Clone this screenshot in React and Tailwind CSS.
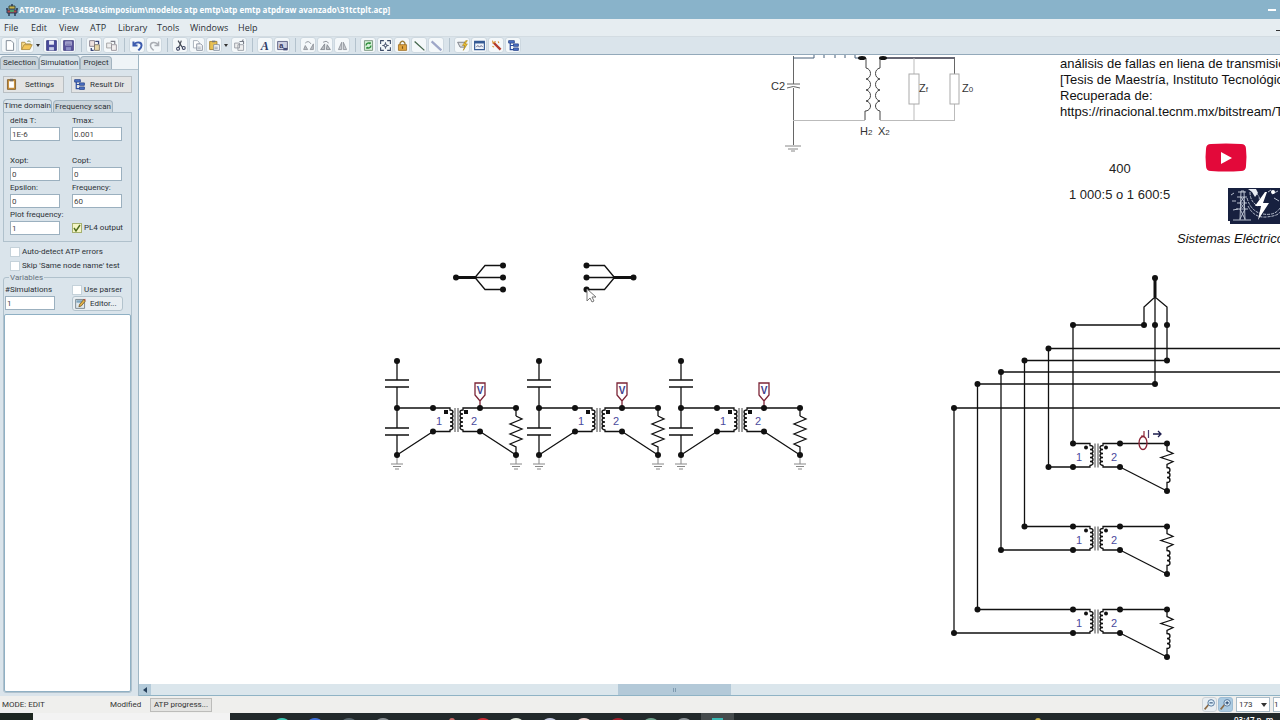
import React from "react";

const INK = "#111111";

/* ---------- toolbar ---------- */

const ICONS = {
  newFile: (
    <path d="M4 2h6l3 3v9H4z" fill="#fff" stroke="#6b7785" />
  ),
  open: (
    <>
      <path d="M2 13V4h4l1 2h6v2" fill="#f6dc8c" stroke="#a8873a" />
      <path d="M2 13l3-6h10l-3 6z" fill="#f3c75a" stroke="#a8873a" />
      <path d="M9 3q3-2 4 1" fill="none" stroke="#5b7a3c" />
    </>
  ),
  save: (
    <>
      <path d="M2 2h12v12H2z" fill="#4a4c9c" stroke="#33357c" />
      <path d="M5 2h6v5H5z" fill="#e9ecf8" />
      <path d="M5 10h6v4H5z" fill="#c5cae6" />
    </>
  ),
  saveAs: (
    <>
      <path d="M2 2h12v12H2z" fill="#5b559c" stroke="#3d3a7c" />
      <path d="M4 3h8v5H4z" fill="#b9b8da" />
      <path d="M5 10h6v4H5z" fill="#8d90c6" />
      <path d="M5 5h6M5 7h6" stroke="#6a68a6" />
    </>
  ),
  importFile: (
    <>
      <path d="M2 2h6v7H2z" fill="#efe3e0" stroke="#7b7480" />
      <path d="M8 7h6v7H8z" fill="#e8d7a8" stroke="#6f6a60" />
      <path d="M9 3h4v3M4 11v3h3" fill="none" stroke="#3a4577" strokeWidth="1.6" />
    </>
  ),
  exportFile: (
    <>
      <path d="M2 5h6v6H2z" fill="#eee" stroke="#999" />
      <path d="M8 7h6v7H8z" fill="#f1eeee" stroke="#8d8890" />
      <path d="M7 3h5v3" fill="none" stroke="#7d7d88" strokeWidth="1.4" />
    </>
  ),
  undo: (
    <path d="M3 3v5h5M3.500 7.500C6 3 13 3 13 8c0 3-2 4-4 6" fill="none" stroke="#3d5cae" strokeWidth="2.400" />
  ),
  redo: (
    <path d="M13 3v5H8M12.500 7.500C10 3 3 3 3 8c0 3 2 4 4 6" fill="none" stroke="#a9adb3" strokeWidth="1.800" />
  ),
  cut: (
    <>
      <path d="M5 2l5 8M9 2L7 8l-2 3" fill="none" stroke="#444a55" strokeWidth="1.400" />
      <circle cx="5" cy="12" r="1.800" fill="none" stroke="#39415f" strokeWidth="1.300" />
      <circle cx="12" cy="11" r="1.800" fill="none" stroke="#39415f" strokeWidth="1.300" />
    </>
  ),
  copy: (
    <>
      <path d="M3 2h5l2 2v7H3z" fill="#fff" stroke="#9aa2ae" />
      <path d="M7 6h5l2 2v6H7z" fill="#f4f5f7" stroke="#7f8896" />
      <path d="M8 10h4M8 12h4" stroke="#9aa2ae" />
    </>
  ),
  paste: (
    <>
      <path d="M2 3h9v10H2z" fill="#e8c052" stroke="#9a7a2c" />
      <path d="M5 2h4v2H5z" fill="#777" />
      <path d="M7 7h7v7H7z" fill="#fff" stroke="#7b8798" />
      <path d="M8 10h4M8 12h4" stroke="#7b8798" />
    </>
  ),
  duplicate: (
    <>
      <path d="M2 5h6v6H2zM6 7h7v7H6z" fill="#eee" stroke="#8f949c" />
      <path d="M8 3h5v3M11 2l2-1" fill="none" stroke="#777c86" strokeWidth="1.300" />
    </>
  ),
  textTool: (
    <text x="2" y="14" fontSize="15" fontStyle="italic" fontFamily="Liberation Serif, serif" fontWeight="700" fill="#2b3a66">A</text>
  ),
  textBox: (
    <>
      <path d="M2 3h12v10H2z" fill="#cdd0e2" stroke="#4c5076" />
      <text x="4" y="11" fontSize="9" fontWeight="700" fontFamily="Liberation Sans, sans-serif" fill="#33355c">a</text>
      <path d="M9 11h5v3H9z" fill="#454b78" />
    </>
  ),
  rotateLeft: (
    <>
      <path d="M2 13h5L4 8zM10 13h4V6z" fill="#b9bdc2" stroke="#8a8f96" />
      <path d="M4 5q4-4 7 1" fill="none" stroke="#7d828a" />
    </>
  ),
  rotateRight: (
    <>
      <path d="M2 13h5V6zM9 13h5l-4-6z" fill="#b9bdc2" stroke="#7d828a" />
      <path d="M5 4q4-3 7 1" fill="none" stroke="#7d828a" />
    </>
  ),
  mirror: (
    <path d="M3 13h4V4zM9 13h4L9 4z" fill="#c9cdd2" stroke="#8a8f96" />
  ),
  refresh: (
    <>
      <path d="M3 2h10v12H3z" fill="#d4efd6" stroke="#6e8a72" />
      <path d="M5 8c0-3 4-4 5-2V4M11 8c0 3-4 4-5 2v2" fill="none" stroke="#2f8f3d" strokeWidth="1.700" />
    </>
  ),
  fit: (
    <>
      <path d="M2 6V2h4M10 2h4v4M14 10v4h-4M6 14H2v-4" fill="none" stroke="#3c4a66" strokeWidth="1.300" />
      <path d="M8 4v8M4 8h8" stroke="#55617a" strokeWidth="1.300" />
      <path d="M6.500 6.500h3v3h-3z" fill="#fff" stroke="#3c4a66" />
    </>
  ),
  lock: (
    <>
      <path d="M5 8V5q3-5 6 0v3" fill="none" stroke="#9a7b35" strokeWidth="1.600" />
      <path d="M3 7h10v7H3z" fill="#e0a53f" stroke="#9c6d22" />
      <path d="M8 9v3" stroke="#7a5218" strokeWidth="1.400" />
    </>
  ),
  line: <path d="M2 3l12 11" stroke="#41644a" strokeWidth="1.600" />,
  relation: <path d="M2 3l12 11" stroke="#9ea7c8" strokeWidth="2.800" />,
  run: (
    <>
      <path d="M2 4h9v6H5z" fill="#d9dcdf" stroke="#6a6f77" />
      <path d="M12 2L8 8h3l-2 6 5-8h-3l3-4z" fill="#f4c531" stroke="#a07c14" strokeWidth="0.700" />
    </>
  ),
  plot: (
    <>
      <path d="M2 3h12v10H2z" fill="#eef4fb" stroke="#355a94" strokeWidth="1.400" />
      <path d="M2 4.500h12" stroke="#355a94" strokeWidth="2" />
      <path d="M4 10l2-2 2 2 2-2 2 2" fill="none" stroke="#446" />
    </>
  ),
  wizard: (
    <>
      <path d="M4 4l9 9" stroke="#b33a2b" strokeWidth="3" />
      <path d="M3 2l1 3 3-2M10 3l1 2M3 9l2 1" stroke="#d99132" strokeWidth="1.300" fill="none" />
    </>
  ),
  tree: (
    <>
      <path d="M4 3v10h4M4 8h4" fill="none" stroke="#2d4ea0" strokeWidth="1.500" />
      <path d="M2 2h7v3H2zM8 6h6v3H8zM8 11h6v3H8z" fill="#4f74c8" stroke="#2a4488" />
    </>
  ),
  clipboard: (
    <>
      <path d="M3 2h10v12H3z" fill="#c9913c" stroke="#7c5a26" />
      <path d="M5 4h6v8H5z" fill="#fff" />
      <path d="M6 1h4v3H6z" fill="#75706a" />
    </>
  ),
  editor: (
    <>
      <path d="M2 3h11v11H2z" fill="#dfe8ee" stroke="#6a7680" />
      <path d="M3 4h9v3H3z" fill="#7fa6bf" />
      <path d="M6 12l1-3 5-6 2 2-5 6z" fill="#e3b448" stroke="#75592a" />
      <path d="M12 3l2-1v3z" fill="#c23b3b" />
    </>
  ),
};

function Icon({ name, className = "size-[13px]" }) {
  return (
    <svg viewBox="0 0 16 16" className={`${className} shrink-0`} aria-hidden="true">
      {ICONS[name]}
    </svg>
  );
}

const TOOLS = [
  [["newFile", "New"], ["open", "Open", true], ["save", "Save"], ["saveAs", "Save as"]],
  [["importFile", "Import"], ["exportFile", "Export"]],
  [["undo", "Undo"], ["redo", "Redo"]],
  [["cut", "Cut"], ["copy", "Copy"], ["paste", "Paste", true], ["duplicate", "Duplicate"]],
  [["textTool", "Text"], ["textBox", "Edit text"]],
  [["rotateLeft", "Rotate left"], ["rotateRight", "Rotate right"], ["mirror", "Flip"]],
  [["refresh", "Refresh"], ["fit", "Fit"], ["lock", "Lock"], ["line", "Line"], ["relation", "Relation"]],
  [["run", "Run ATP"], ["plot", "Plot"], ["wizard", "Wizard"], ["tree", "Structure"]],
];

function Toolbar() {
  return (
    <div className="flex h-[18px] shrink-0 items-start border-b border-[#93a9ba] bg-[#dae4eb] px-px">
      {TOOLS.map((group, i) => (
        <React.Fragment key={i}>
          {i > 0 && (
            <span className="flex h-4 w-[10px] items-center justify-center">
              <span className="h-[14px] w-px bg-[#b3c2cd]" />
            </span>
          )}
          <div className="flex gap-px">
            {group.map(([icon, label, caret]) => (
              <span key={icon} className="flex items-center">
                <button
                  aria-label={label}
                  className="flex size-4 items-center justify-center rounded-[3px] border border-[#cdd8e0] bg-[#f4f8fa]"
                >
                  <Icon name={icon} />
                </button>
                {caret && (
                  <button aria-label={`${label} options`} className="flex h-4 w-2 items-center justify-center">
                    <svg viewBox="0 0 4 3" className="h-[3px] w-1">
                      <path d="M0 0h4L2 3z" fill="#333" />
                    </svg>
                  </button>
                )}
              </span>
            ))}
          </div>
        </React.Fragment>
      ))}
    </div>
  );
}

/* ---------- sidebar ---------- */

function Field({ id, label, value }) {
  return (
    <div className="flex flex-col">
      <label htmlFor={id} className="h-[13px] leading-[13px] whitespace-nowrap">{label}</label>
      <input
        id={id}
        defaultValue={value}
        className="h-[14px] w-[50px] border border-[#9bb0bf] bg-white px-px leading-[12px] text-[#444]"
      />
    </div>
  );
}

function Check({ label, checked }) {
  return (
    <label className="flex items-center gap-[2px] whitespace-nowrap">
      <span className="relative flex size-[10px]">
        <input
          type="checkbox"
          defaultChecked={checked}
          className="peer size-[10px] appearance-none border border-[#c5d2da] bg-white checked:border-[#a5b070] checked:bg-[#f5f6c4]"
        />
        <svg viewBox="0 0 10 10" className="pointer-events-none absolute inset-0 hidden peer-checked:block">
          <path d="M2 5l2 3 4-6" fill="none" stroke="#4d6b1c" strokeWidth="1.400" />
        </svg>
      </span>
      {label}
    </label>
  );
}

const TAB = "rounded-t-[4px] border border-b-0 border-[#a3b4c0]";

function Sidebar() {
  return (
    <aside className="flex w-[139px] shrink-0 flex-col border-r border-[#9fb6c4] bg-[#dae4eb] font-[Roboto,sans-serif] text-[8px] leading-[12px] text-[#2c3136]">
      <div className="flex h-[14px] shrink-0 items-end bg-[#eff4f7]">
        <button className={`${TAB} h-[13px] w-[39px] bg-[#cbd5dc]`}>Selection</button>
        <button className={`${TAB} h-[14px] w-[41px] bg-[#dae4eb]`}>Simulation</button>
        <button className={`${TAB} h-[13px] w-8 bg-[#cbd5dc]`}>Project</button>
      </div>
      <div className="flex min-h-0 flex-1 flex-col border-t border-[#b4c4cf] pt-[6px] pr-[6px] pb-[3px] pl-[3px]">
        <div className="flex shrink-0 justify-between">
          <button className="flex h-[17px] w-[61px] items-center gap-[7px] border border-[#b9bfc3] bg-[#e3e4e4] pl-px">
            <Icon name="clipboard" />
            Settings
          </button>
          <button className="flex h-[17px] w-[61px] items-center gap-1 border border-[#b9bfc3] bg-[#e3e4e4] pl-px">
            <Icon name="tree" />
            Result Dir
          </button>
        </div>
        <div className="mt-[6px] flex h-[13px] shrink-0 items-end gap-px">
          <button className={`${TAB} h-[13px] w-[49px] bg-[#dae4eb] whitespace-nowrap`}>Time domain</button>
          <button className={`${TAB} h-3 w-[60px] bg-[#cbd5dc] whitespace-nowrap`}>Frequency scan</button>
        </div>
        <div className="grid h-[130px] shrink-0 grid-cols-[62px_1fr] content-start border border-[#b0c1cc] bg-[#d9e3ea] pt-px pl-[6px]">
          <Field id="delta-t" label="delta T:" value="1E-6" />
          <Field id="tmax" label="Tmax:" value="0.001" />
          <div className="col-span-2 h-[13px]" />
          <Field id="xopt" label="Xopt:" value="0" />
          <Field id="copt" label="Copt:" value="0" />
          <Field id="epsilon" label="Epsilon:" value="0" />
          <Field id="frequency" label="Frequency:" value="60" />
          <Field id="plot-frequency" label="Plot frequency:" value="1" />
          <div className="flex items-end pb-px">
            <Check label="PL4 output" checked />
          </div>
        </div>
        <div className="mt-1 flex shrink-0 flex-col gap-[2px] pl-[7px]">
          <Check label="Auto-detect ATP errors" />
          <Check label="Skip 'Same node name' test" />
        </div>
        <fieldset className="flex min-h-0 flex-1 flex-col rounded-[3px] border border-[#b0c1cc]">
          <legend className="ml-[5px] h-[11px] px-px leading-[11px] text-[#66727c]">Variables</legend>
          <div className="grid shrink-0 grid-cols-[67px_1fr] pl-px">
            <Field id="simulations" label="#Simulations" value="1" />
            <div className="flex flex-col">
              <span className="flex h-[13px] items-center"><Check label="Use parser" /></span>
              <button className="flex h-[15px] w-[51px] items-center gap-[3px] rounded-[3px] border border-[#b3c3cd] bg-[#e8eef2] pl-px">
                <Icon name="editor" />
                Editor...
              </button>
            </div>
          </div>
          <div className="mt-[3px] min-h-0 flex-1 rounded-[2px] border border-[#8fb0c4] bg-white" />
        </fieldset>
      </div>
    </aside>
  );
}

/* ---------- schematic ---------- */

function Node({ x, y }) {
  return <circle cx={x} cy={y} r="3" fill={INK} />;
}

function Label({ x, y, children, color = "#333", size = 11 }) {
  return (
    <text x={x} y={y} fontSize={size} fill={color} fontFamily="Liberation Sans, Arial, sans-serif">
      {children}
    </text>
  );
}

function Ground({ x, y }) {
  return (
    <path d={`M${x} ${y}v9M${x - 6} ${y + 9}h12M${x - 4} ${y + 11.5}h8M${x - 2} ${y + 14}h4`} stroke="#888" strokeWidth="1" fill="none" />
  );
}

function Transformer({ x, y, square }) {
  const mark = (cx) =>
    square ? (
      <rect x={cx - 2} y={2} width="4" height="4" fill={INK} />
    ) : (
      <circle cx={cx} cy={4} r="2" fill={INK} />
    );
  return (
    <g transform={`translate(${x} ${y})`}>
      <g fill="none" stroke={INK} strokeWidth="1.300">
        <path d="M0 0h17v2c4 0 4 4 0 4c4 0 4 4 0 4c4 0 4 4 0 4c4 0 4 4 0 4c4 0 4 3 0 4v1.500H0" />
        <path d="M47 0H30v2c-4 0-4 4 0 4c-4 0-4 4 0 4c-4 0-4 4 0 4c-4 0-4 4 0 4c-4 0-4 3 0 4v1.500h17" />
        <path d="M22 0v24M25 0v24" stroke="#444" strokeWidth="1" />
      </g>
      {mark(13)}
      {mark(33)}
      <Label x={3} y={17} color="#4a4a9c">1</Label>
      <Label x={38} y={17} color="#4a4a9c">2</Label>
      <Node x={0} y={0} />
      <Node x={0} y={23.5} />
      <Node x={47} y={0} />
      <Node x={47} y={23.5} />
    </g>
  );
}

function Divider({ x }) {
  return (
    <g transform={`translate(${x} 0)`} fill="none" stroke={INK} strokeWidth="1.300">
      <path d="M0 361v19M0 387v41M0 435v20M0 408h36M0 455l36-23.500M83 408h36v8M83 431.500l36 23.500" />
      <path d="M-12 380h24M-12 387h24M-12 428h24M-12 435h24" />
      <path d="M119 416l6 3-12 5 12 5-12 5 12 5-12 5 6 3v8" />
      <Ground x={0} y={455} />
      <Ground x={119} y={455} />
      <path d="M83 408v-7M78 383h10v12l-5 6-5-6z" stroke="#7c2436" />
      <text x="83" y="394" textAnchor="middle" fontSize="10" fontWeight="700" fontFamily="Liberation Sans, Arial, sans-serif" fill="#40408c" stroke="none">V</text>
      <g stroke="none">
        <Node x={0} y={361} />
        <Node x={0} y={408} />
        <Node x={0} y={455} />
        <Node x={119} y={408} />
        <Node x={119} y={455} />
      </g>
      <g stroke="none">
        <Transformer x={36} y={408} square />
      </g>
    </g>
  );
}

function CurrentStage({ y }) {
  return (
    <g>
      <path
        d={`M1120 ${y}h47v7l6 3-12 4 12 4-6 3v3c4 0 4 5 0 5c4 0 4 5 0 5c4 0 4 5 0 5v8.500M1120 ${y + 23.5}l47 24`}
        fill="none"
        stroke={INK}
        strokeWidth="1.300"
      />
      <Node x={1167} y={y} />
      <Node x={1167} y={y + 47.5} />
      <Transformer x={1073} y={y} />
    </g>
  );
}

const JUNCTIONS = [
  [1155, 278], [1144, 325], [1155, 325], [1167, 325], [1073, 325],
  [1048.5, 348.5], [1024.5, 360.5], [1167, 360.5], [1001, 372],
  [977.5, 384], [1155, 384], [954, 408],
  [1048.5, 467], [1024.5, 526.5], [1001, 550], [977.5, 609.5], [954, 633],
];

function EquivalentCircuit() {
  return (
    <g fill="none" stroke="#666" strokeWidth="1">
      <path d="M793.500 56v28M793.500 88v57" />
      <path d="M787 84h13M787 88q6-3 13 0" />
      <path d="M785 146h16M788 149h10M791 151h4" stroke="#888" />
      <path d="M793 58h21v-3M824 55v3M835 55v3M845 55v3M855 55v3h7" stroke="#49617a" />
      <path d="M862 58h4v10c6 1 6 10 0 11c6 1 6 10 0 11c6 1 6 10 0 11c6 1 6 9 0 10h-1v9" stroke="#444" />
      <path d="M880 58v10c-6 1-6 10 0 11c-6 1-6 10 0 11c-6 1-6 10 0 11c-6 1-6 9 0 10v9" stroke="#444" />
      <path d="M880 58h75" stroke="#334" strokeWidth="1.300" />
      <path d="M793 120.500h72M880 120.500h75M914 58v16M914 104v16M954.500 104v16" stroke="#bbb" />
      <path d="M954.500 58v16" />
      <rect x="909" y="74" width="10" height="30" stroke="#aaa" />
      <rect x="950" y="74" width="9" height="30" stroke="#aaa" />
      <g stroke="none">
        <ellipse cx="862" cy="58" rx="4" ry="2" fill={INK} />
        <ellipse cx="883" cy="58" rx="4" ry="2" fill={INK} />
        <Label x={771} y={90}>C2</Label>
        <Label x={860} y={135}>H<tspan fontSize="8">2</tspan></Label>
        <Label x={878} y={135}>X<tspan fontSize="8">2</tspan></Label>
        <Label x={919} y={92}>Z<tspan fontSize="8">f</tspan></Label>
        <Label x={962} y={92}>Z<tspan fontSize="8">0</tspan></Label>
      </g>
    </g>
  );
}

function Splitter() {
  return (
    <g stroke={INK} fill="none">
      <path d="M0 0h20" strokeWidth="3" />
      <path d="M19 0l10-12h18M19 0h28M19 0l10 12h18" strokeWidth="1.300" />
      <g stroke="none">
        <Node x={0} y={0} />
        <Node x={47} y={-12} />
        <Node x={47} y={0} />
        <Node x={47} y={12} />
      </g>
    </g>
  );
}

function Schematic() {
  return (
    <svg className="absolute inset-0 size-full" aria-label="Circuit">
      <g transform="translate(-139 -55)">
        <EquivalentCircuit />
        <g transform="translate(456 277.500)"><Splitter /></g>
        <g transform="translate(633.500 277.500) scale(-1 1)"><Splitter /></g>
        <Divider x={397} />
        <Divider x={539} />
        <Divider x={681} />
        <path d="M1155 278v19" stroke={INK} strokeWidth="3" />
        <path
          d="M1155 297l-11 10v18h-71v118M1155 297l12 10v53.500h-142.500V526.500h48M1155 297v87H977.500v225.500h95M1300 348.500h-251.500V467h24M1300 372h-299v178h72M1300 408H954v225h119"
          fill="none"
          stroke={INK}
          strokeWidth="1.300"
        />
        {JUNCTIONS.map(([x, y]) => <Node key={`${x}-${y}`} x={x} y={y} />)}
        <CurrentStage y={443.5} />
        <CurrentStage y={526.5} />
        <CurrentStage y={609.5} />
        <ellipse cx="1143" cy="443" rx="4" ry="6.500" fill="none" stroke="#8c2436" strokeWidth="1.300" />
        <path d="M1144 431v5h-3" fill="none" stroke="#8c2436" strokeWidth="1.200" />
        <path d="M1148.500 430v8" stroke="#4a3a6c" strokeWidth="1.200" />
        <path d="M1153 434h7M1158 431l3 3-3 3" stroke="#1c1c4c" strokeWidth="1.300" fill="none" />
        <path d="M587 289v12l3-3 2 4 2-1-2-4h4z" fill="#fff" stroke="#777" strokeWidth="1" />
      </g>
    </svg>
  );
}

function BrandMark() {
  return (
    <svg viewBox="0 0 60 36" className="h-9 w-[60px]" aria-hidden="true">
      <path d="M0 0h60v36H2V33H0z" fill="#17203f" />
      <g fill="none" stroke="#c8cfdd" strokeWidth="0.900">
        <path d="M12 32l1-29 3 0 1 29M10 4h8M9 9h10M9 15h10M8 21h12M13 9l4 6-5 6 5 10M16 9l-4 6 5 6-5 10M5 32h18" />
        <path d="M19 10q4 14 16 16t17-6M20 18q6 12 18 11t14-5M22 4q0 10 8 14M25 3q8 5 6 9" strokeDasharray="3 1" />
        <path d="M4 13h4M3 7l3-2M5 22l5-1M44 6l6-3M46 10l5 3M40 4l3-2" />
      </g>
      <path d="M20 1l8 0 2 4-3 4-3-5z" fill="#e6eaf2" />
      <path d="M37 4l-10 14h6l-3 14 11-17h-6l4-11z" fill="#fff" />
      <circle cx="45" cy="4" r="2" fill="#fff" />
    </svg>
  );
}

function Canvas() {
  return (
    <section className="relative min-h-0 flex-1 overflow-hidden bg-white font-['Liberation_Sans',Arial,sans-serif] text-[13px] leading-4 text-[#222]">
      <Schematic />
      <p className="absolute top-px left-[921px] whitespace-nowrap text-[#111]">
        análisis de fallas en liena de transmisió
        <br />
        [Tesis de Maestría, Instituto Tecnológic
        <br />
        Recuperada de:
        <br />
        https://rinacional.tecnm.mx/bitstream/Te
      </p>
      <span className="absolute top-[106px] left-[970px]">400</span>
      <span className="absolute top-[132px] left-[930px] whitespace-nowrap">1 000:5 o 1 600:5</span>
      <svg viewBox="0 0 42 29" className="absolute top-[88px] left-[1066px] h-[29px] w-[42px]" aria-label="Video">
        <path d="M6 1Q21 0 36 1Q41 1 41 6Q42 14 41 23Q41 28 36 28Q21 29 6 28Q1 28 1 23Q0 14 1 6Q1 1 6 1z" fill="#e3093a" />
        <path d="M16 9l11 6-11 6z" fill="#fff" />
      </svg>
      <div className="absolute top-[133px] left-[1089px]"><BrandMark /></div>
      <span className="absolute top-[176px] left-[1038px] whitespace-nowrap text-[#111] italic">Sistemas Eléctrico</span>
    </section>
  );
}

function ScrollBar() {
  return (
    <div className="flex h-3 shrink-0 border-b border-[#8fb3c5] bg-[#dbe6ec]">
      <button aria-label="Scroll left" className="flex w-3 items-center justify-center bg-[#b4cbda]">
        <svg viewBox="0 0 4 6" className="h-[6px] w-1"><path d="M4 0v6L0 3z" fill="#26415c" /></svg>
      </button>
      <div className="flex-[467]" />
      <div className="flex flex-[112] items-center justify-center gap-px bg-[#b3c9d8]">
        <span className="h-1 w-px bg-[#7f9bb0]" />
        <span className="h-1 w-px bg-[#7f9bb0]" />
      </div>
      <div className="flex-[549]" />
    </div>
  );
}

/* ---------- bottom bars ---------- */

function Magnifier({ plus }) {
  return (
    <svg viewBox="0 0 16 16" className="size-[13px]" aria-hidden="true">
      <path d="M2 14l5-6" stroke="#8d6b45" strokeWidth="2" />
      <circle cx="10" cy="6" r="4" fill="#dff0fb" stroke="#58799c" strokeWidth="1.200" />
      <path d={plus ? "M8 6h4M10 4v4" : "M8 6h4"} stroke="#25466e" strokeWidth="1.300" />
    </svg>
  );
}

function StatusBar() {
  return (
    <footer className="flex h-[17px] shrink-0 items-center bg-[#efefed] font-[Roboto,sans-serif] text-[8px] text-[#333]">
      <span className="w-[110px] pl-[2px]">MODE: EDIT</span>
      <span className="w-10">Modified</span>
      <button className="h-[14px] w-[62px] border border-[#bcbcba] bg-[#e4e4e2]">ATP progress...</button>
      <div className="ml-auto flex items-center gap-px">
        <button aria-label="Zoom out" className="flex size-[15px] items-center justify-center rounded-[3px] border border-[#ccd3d8] bg-[#e8eef2]">
          <Magnifier />
        </button>
        <button aria-label="Zoom in" className="flex size-[15px] items-center justify-center rounded-[3px] border border-[#9dbcd3] bg-[#abcbe2]">
          <Magnifier plus />
        </button>
        <div className="relative ml-[2px] flex">
          <select aria-label="Zoom" className="h-[15px] w-[34px] appearance-none border border-[#a9bcc9] bg-white pl-[2px]">
            <option>173</option>
          </select>
          <svg viewBox="0 0 6 4" className="pointer-events-none absolute top-[6px] right-[3px] h-1 w-[6px]">
            <path d="M0 0h6L3 4z" fill="#333" />
          </svg>
        </div>
        <select aria-label="Page" className="ml-[2px] h-[15px] w-[7px] appearance-none border border-r-0 border-[#a9bcc9] bg-white">
          <option>1</option>
        </select>
      </div>
    </footer>
  );
}

const APPS = [
  [282, "#3fc7b4"], [315, "#3f6fd6"], [349, "#56646c"], [383, "#8a9094"], [452, "#c86a68"],
  [483, "#c92e36"], [516, "#dfe5da"], [550, "#c3c9e0"], [584, "#f1d6d2"], [618, "#a3202c"],
  [651, "#6fa18c"], [684, "#8d9498"], [1038, "#c9b04a"],
];

function TaskBar() {
  return (
    <div className="flex h-[7px] shrink-0 overflow-hidden bg-[#22292b]">
      <span className="w-[33px] bg-[#1d2620]" />
      <input aria-label="Search" className="w-[197px] bg-[#f3f3f3]" />
      <div className="relative flex-1">
        <svg className="absolute inset-0 size-full" aria-hidden="true">
          <g transform="translate(-230 0)">
            <rect x="701" y="0" width="33" height="7" fill="#454b4d" />
            {APPS.map(([x, fill]) => <ellipse key={x} cx={x} cy="8" rx={x === 1038 || x === 452 ? 3 : 6} ry="3" fill={fill} />)}
            <rect x="712" y="5" width="11" height="2" fill="#39b9b4" />
          </g>
        </svg>
      </div>
      <span className="w-[46px] pt-[2px] text-[8px] leading-[10px] font-semibold whitespace-nowrap text-white">03:47 p. m.</span>
    </div>
  );
}

export default function App() {
  return (
    <div className="flex h-screen flex-col overflow-hidden bg-[#e6edf1] font-['Open_Sans',sans-serif]">
      <header className="flex h-[19px] shrink-0 items-center gap-px bg-[#89b3ca] pl-[6px] text-[8px] font-bold text-white">
        <svg viewBox="0 0 12 12" className="size-3" aria-hidden="true">
          <path d="M3 2h6v3H3z" fill="#c9b14a" stroke="#3a4b3c" />
          <path d="M1 6h10v3H1z" fill="#b04a4a" stroke="#26405a" />
          <path d="M3 9v3M9 9v3M6 0v2M0 5h2M10 5h2" stroke="#25314a" strokeWidth="1.400" />
          <path d="M4 6h4v2H4z" fill="#4fa06a" />
        </svg>
        <h1 className="flex-1 whitespace-nowrap">
          ATPDraw - [F:\34584\simposium\modelos atp emtp\atp emtp atpdraw avanzado\31tctplt.acp]
        </h1>
        <button aria-label="Minimize" className="flex w-3 justify-start">
          <span className="h-[2px] w-2 bg-white" />
        </button>
      </header>
      <nav className="flex h-[18px] shrink-0 items-center border-b border-[#d3dce2] bg-[#e6edf1] pl-1 text-[9px] text-[#2c3136]">
        <button className="w-[27px] text-left">File</button>
        <button className="w-7 text-left">Edit</button>
        <button className="w-[31px] text-left">View</button>
        <button className="w-7 text-left">ATP</button>
        <button className="w-[39px] text-left">Library</button>
        <button className="w-[33px] text-left">Tools</button>
        <button className="w-12 text-left">Windows</button>
        <button className="text-left">Help</button>
        <button aria-label="Minimize document" className="ml-auto flex h-full w-1 items-end pb-[5px]">
          <span className="h-px w-1 bg-[#333]" />
        </button>
      </nav>
      <Toolbar />
      <main className="flex min-h-0 flex-1">
        <Sidebar />
        <div className="flex min-w-0 flex-1 flex-col">
          <Canvas />
          <ScrollBar />
        </div>
      </main>
      <StatusBar />
      <TaskBar />
    </div>
  );
}
